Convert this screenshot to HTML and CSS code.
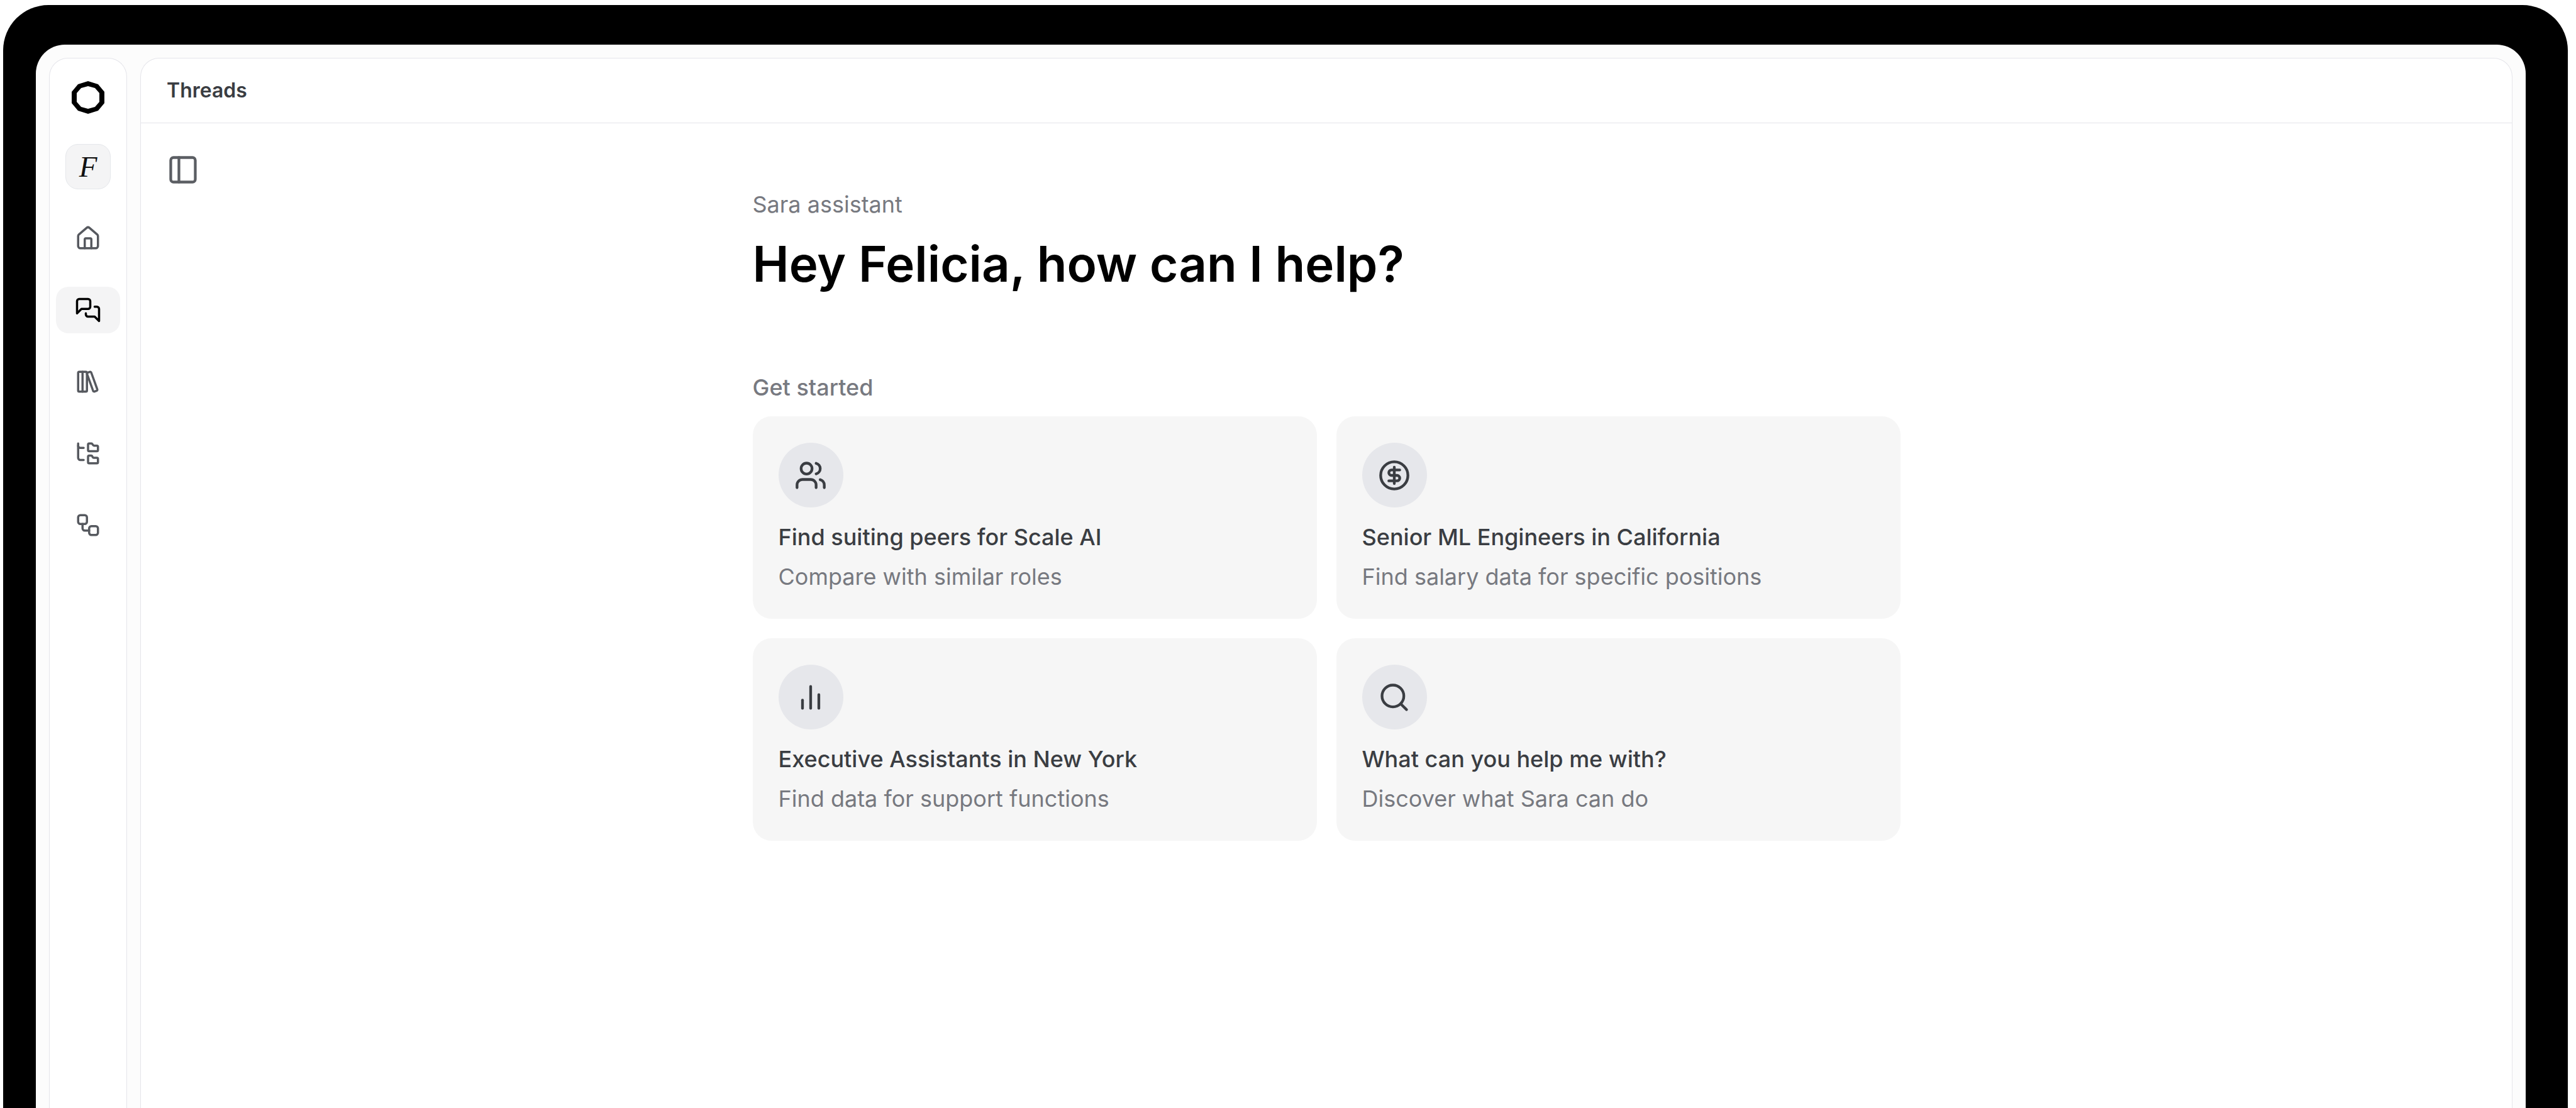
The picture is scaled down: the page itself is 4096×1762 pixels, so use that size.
FILE: index.html
```html
<!DOCTYPE html>
<html lang="en">
<head>
    <meta charset="UTF-8">
    <meta name="viewport" content="width=device-width, initial-scale=1.0">
    <title>Threads | Sara assistant</title>
    <link rel="stylesheet" href="styles.css">
</head>
<body>
    <div class="device">
        <div class="screen">
            <aside class="sidebar">
                <a href="#" class="logo" aria-label="Start page">
                    <svg viewBox="0 0 52 52">
                        <path fill-rule="evenodd" d="M26 0 L42 5 L52 17 V35 L42 47 L26 52 L10 47 L0 35 V17 L10 5 Z M26 8 L15 11 L8 19 V33 L15 41 L26 44 L37 41 L44 33 V19 L37 11 Z"/>
                    </svg>
                </a>
                <button type="button" class="workspace">F</button>
                <nav class="nav">
                    <a href="#" class="nav-link" aria-label="Home">
                        <svg class="icon" viewBox="0 0 24 24">
                            <path d="M15 21v-8a1 1 0 0 0-1-1h-4a1 1 0 0 0-1 1v8"/>
                            <path d="M3 10a2 2 0 0 1 .709-1.528l7-5.999a2 2 0 0 1 2.582 0l7 5.999A2 2 0 0 1 21 10v9a2 2 0 0 1-2 2H5a2 2 0 0 1-2-2z"/>
                        </svg>
                    </a>
                    <a href="#" class="nav-link active" aria-label="Threads">
                        <svg class="icon" viewBox="0 0 24 24">
                            <path d="M14 9a2 2 0 0 1-2 2H6l-4 4V4a2 2 0 0 1 2-2h8a2 2 0 0 1 2 2z"/>
                            <path d="M18 9h2a2 2 0 0 1 2 2v11l-4-4h-6a2 2 0 0 1-2-2v-1"/>
                        </svg>
                    </a>
                    <a href="#" class="nav-link" aria-label="Library">
                        <svg class="icon" viewBox="0 0 24 24">
                            <rect width="8" height="18" x="3" y="3" rx="1"/>
                            <path d="M7 3v18"/>
                            <path d="M20.4 18.9c.2.5-.1 1.1-.6 1.3l-1.9.7c-.5.2-1.1-.1-1.3-.6L11.1 5.1c-.2-.5.1-1.1.6-1.3l1.9-.7c.5-.2 1.1.1 1.3.6Z"/>
                        </svg>
                    </a>
                    <a href="#" class="nav-link" aria-label="Folders">
                        <svg class="icon" viewBox="0 0 24 24">
                            <path d="M20 10a1 1 0 0 0 1-1V6a1 1 0 0 0-1-1h-2.5a1 1 0 0 1-.8-.4l-.9-1.2A1 1 0 0 0 15 3h-2a1 1 0 0 0-1 1v5a1 1 0 0 0 1 1Z"/>
                            <path d="M20 21a1 1 0 0 0 1-1v-3a1 1 0 0 0-1-1h-2.9a1 1 0 0 1-.88-.55l-.42-.85a1 1 0 0 0-.92-.6H13a1 1 0 0 0-1 1v5a1 1 0 0 0 1 1Z"/>
                            <path d="M3 5a2 2 0 0 0 2 2h3"/>
                            <path d="M3 3v13a2 2 0 0 0 2 2h3"/>
                        </svg>
                    </a>
                    <a href="#" class="nav-link" aria-label="Workflows">
                        <svg class="icon" viewBox="0 0 24 24">
                            <rect width="8" height="8" x="3" y="3" rx="2"/>
                            <path d="M7 11v4a2 2 0 0 0 2 2h4"/>
                            <rect width="8" height="8" x="13" y="13" rx="2"/>
                        </svg>
                    </a>
                </nav>
            </aside>

            <main class="panel">
                <header class="panel-header">Threads</header>
                <div class="panel-body">
                    <button type="button" class="toggle" aria-label="Toggle thread list">
                        <svg class="icon" viewBox="0 0 24 24">
                            <rect width="18" height="18" x="3" y="3" rx="2"/>
                            <path d="M9 3v18"/>
                        </svg>
                    </button>

                    <section class="welcome">
                        <p class="label">Sara assistant</p>
                        <h1>Hey Felicia, how can I help?</h1>
                        <h2 class="label">Get started</h2>

                        <div class="cards">
                            <a href="#" class="card">
                                <span class="card-icon">
                                    <svg class="icon" viewBox="0 0 24 24">
                                        <path d="M16 21v-2a4 4 0 0 0-4-4H6a4 4 0 0 0-4 4v2"/>
                                        <circle cx="9" cy="7" r="4"/>
                                        <path d="M22 21v-2a4 4 0 0 0-3-3.87"/>
                                        <path d="M16 3.13a4 4 0 0 1 0 7.75"/>
                                    </svg>
                                </span>
                                <h3>Find suiting peers for Scale AI</h3>
                                <p>Compare with similar roles</p>
                            </a>
                            <a href="#" class="card">
                                <span class="card-icon">
                                    <svg class="icon" viewBox="0 0 24 24">
                                        <circle cx="12" cy="12" r="10"/>
                                        <path d="M16 8h-6a2 2 0 1 0 0 4h4a2 2 0 1 1 0 4H8"/>
                                        <path d="M12 18V6"/>
                                    </svg>
                                </span>
                                <h3>Senior ML Engineers in California</h3>
                                <p>Find salary data for specific positions</p>
                            </a>
                            <a href="#" class="card">
                                <span class="card-icon">
                                    <svg class="icon" viewBox="0 0 24 24">
                                        <path d="M12 20V4"/>
                                        <path d="M18 20V10"/>
                                        <path d="M6 20v-6"/>
                                    </svg>
                                </span>
                                <h3>Executive Assistants in New York</h3>
                                <p>Find data for support functions</p>
                            </a>
                            <a href="#" class="card">
                                <span class="card-icon">
                                    <svg class="icon" viewBox="0 0 24 24">
                                        <circle cx="11" cy="11" r="8"/>
                                        <path d="m21 21-4.3-4.3"/>
                                    </svg>
                                </span>
                                <h3>What can you help me with?</h3>
                                <p>Discover what Sara can do</p>
                            </a>
                        </div>
                    </section>
                </div>
            </main>
        </div>
    </div>
</body>
</html>
```
FILE: styles.css
```css
* {
    box-sizing: border-box;
}

body {
    background-color: #fff;
    font-family: Inter, sans-serif;
    font-size: 36px;
    line-height: 52px;
    display: flex;
    min-height: 100vh;
    margin: 0;
    padding: 8px 13px 0 5px;
}

h1, h2, h3, p {
    margin: 0;
}

a {
    color: inherit;
    text-decoration: none;
}

button {
    padding: 0;
    border: none;
    background: none;
    cursor: pointer;
}

svg {
    display: block;
}

.icon {
    width: 52px;
    height: 52px;
    fill: none;
    stroke: currentColor;
    stroke-width: 2;
    stroke-linecap: round;
    stroke-linejoin: round;
}

/* black bezel, runs off the bottom of the window */
.device {
    flex: 1;
    display: flex;
    padding: 63px 67px 0 52px;
    background-color: #000;
    border-radius: 72px 72px 0 0;
}

.screen {
    flex: 1;
    display: flex;
    gap: 21px;
    padding: 21px 21px 0;
    background-color: #fcfcfc;
    border-radius: 46px 46px 0 0;
}

.sidebar, .panel {
    background-color: #fff;
    border: 1px solid #e5e5ea;
    border-bottom: none;
    border-radius: 30px 30px 0 0;
}

.sidebar {
    flex: 0 0 124px;
    display: flex;
    flex-direction: column;
    align-items: center;
    padding-top: 36px;
}

.logo svg {
    width: 52px;
    height: 52px;
    fill: #000;
}

.workspace {
    width: 72px;
    height: 72px;
    margin: 48px 0 41px;
    background-color: #f4f4f5;
    border: 1px solid #e5e7eb;
    border-radius: 20px;
    color: #111;
    font: italic 47px "Liberation Serif", serif;
}

.nav {
    display: flex;
    flex-direction: column;
    gap: 40px;
}

.nav-link {
    display: flex;
    align-items: center;
    justify-content: center;
    width: 102px;
    height: 74px;
    border-radius: 20px;
    color: #56595f;
}

.nav-link .icon {
    width: 42px;
    height: 42px;
}

.nav-link.active {
    background-color: #f4f4f5;
    color: #000;
}

.panel {
    flex: 1;
}

.panel-header {
    padding: 25px 41px;
    border-bottom: 1px solid #e5e5ea;
    color: #3a3d42;
    font-size: 32px;
    font-weight: 600;
}

.panel-body {
    display: grid;
    grid-template-columns: 1fr minmax(0, 1825px) 1fr;
    padding: 48px 41px;
}

.toggle {
    justify-self: start;
    align-self: start;
    color: #5b5e63;
}

.welcome {
    padding-top: 55px;
}

.label {
    color: #777980;
    font-size: 36px;
    font-weight: 400;
}

h1 {
    margin: 22px 0 124px;
    color: #000;
    font-size: 78px;
    font-weight: 600;
    line-height: 93px;
}

h2.label {
    font-weight: 500;
}

.cards {
    display: grid;
    grid-template-columns: 1fr 1fr;
    gap: 31px;
    margin-top: 20px;
}

.card {
    padding: 42px 41px 41px;
    background-color: #f6f6f6;
    border-radius: 30px;
}

.card-icon {
    display: flex;
    align-items: center;
    justify-content: center;
    width: 103px;
    height: 103px;
    margin-bottom: 21px;
    background-color: #e6e7eb;
    border-radius: 50%;
    color: #3a3d42;
}

.card h3 {
    margin-bottom: 11px;
    color: #3a3d42;
    font-size: 36px;
    font-weight: 500;
}

.card p {
    color: #777980;
}
```
